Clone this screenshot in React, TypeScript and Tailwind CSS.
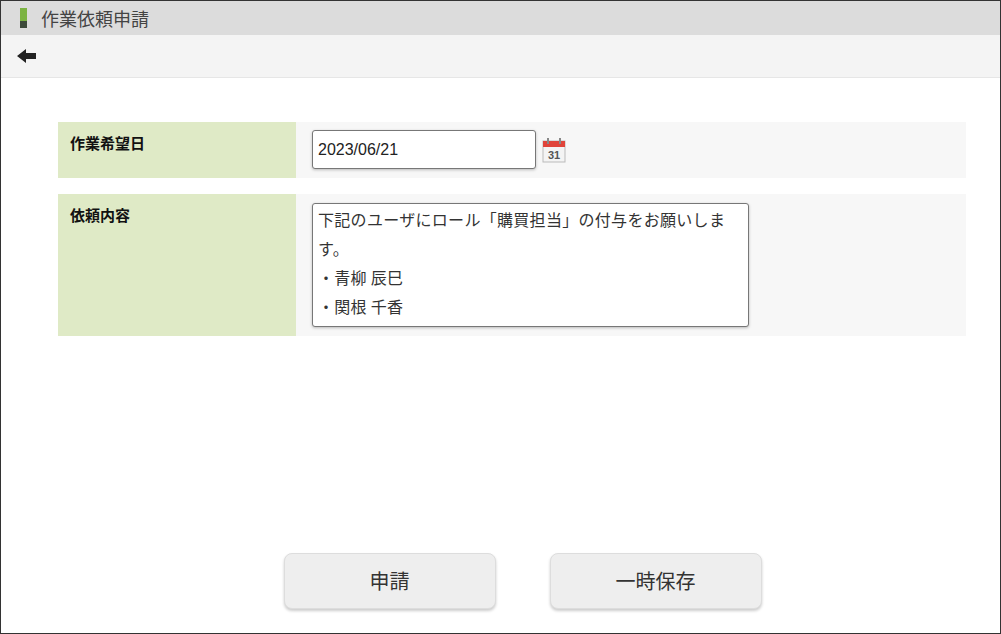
import React from "react";

export default function App() {
  const f = { fontFamily: '"Noto Sans CJK JP", "Liberation Sans", sans-serif' };
  return (
    <div className="w-[1001px] h-[634px] bg-white border border-[#333] flex flex-col text-[#333]" style={f}>
      <div className="h-[34px] bg-[#dcdcdc] flex items-center pl-[19px] gap-[14px] shrink-0">
        <div className="w-[7px] h-[20px] flex flex-col">
          <div className="flex-1 bg-[#7cb342]" />
          <div className="h-[7px] bg-[#3d4a3a]" />
        </div>
        <span className="text-[18px] text-[#444]">作業依頼申請</span>
      </div>
      <div className="h-[43px] bg-[#f4f4f4] border-b border-[#e6e6e6] flex items-center pl-[16px] shrink-0">
        <svg width="20" height="16" viewBox="0 0 20 16"><path d="M0 8 L9 1 V5 H19 V11 H9 V15 Z" fill="#222" /></svg>
      </div>
      <div className="flex flex-col gap-[16px] pt-[44px] pl-[57px] pr-[34px]">
        <div className="flex h-[56px]">
          <div className="w-[238px] bg-[#dfeac6] pl-[12px] pt-[10px] text-[15px] font-bold text-[#111]">作業希望日</div>
          <div className="flex-1 bg-[#f7f7f7] pl-[16px] pt-[8px] flex items-start gap-[6px]">
            <div className="w-[224px] h-[39px] bg-white border border-[#777] rounded-[3px] shadow-[0_1px_3px_rgba(0,0,0,0.25)] flex items-center pl-[5px] text-[16px] text-[#222]" style={{ fontFamily: '"Liberation Sans", sans-serif' }}>2023/06/21</div>
            <svg width="24" height="26" viewBox="0 0 24 26" className="mt-[7px]">
              <rect x="1" y="4" width="22" height="21" fill="#f4f4f4" stroke="#bbb" />
              <rect x="1" y="4" width="22" height="6" fill="#e0443a" />
              <rect x="5" y="1" width="2" height="6" fill="#888" />
              <rect x="17" y="1" width="2" height="6" fill="#888" />
              <text x="12" y="22" textAnchor="middle" fontSize="11" fontWeight="bold" fill="#555" fontFamily="Liberation Sans, sans-serif">31</text>
            </svg>
          </div>
        </div>
        <div className="flex h-[142px]">
          <div className="w-[238px] bg-[#dfeac6] pl-[12px] pt-[10px] text-[15px] font-bold text-[#111]">依頼内容</div>
          <div className="flex-1 bg-[#f7f7f7] pl-[16px] pt-[9px]">
            <div className="w-[437px] h-[124px] bg-white border border-[#777] rounded-[3px] shadow-[0_1px_3px_rgba(0,0,0,0.25)] px-[5px] pt-[1px] text-[16px] leading-[29px] text-[#333] tracking-[0.3px] overflow-hidden">
              <div>下記のユーザにロール「購買担当」の付与をお願いしま</div>
              <div>す。</div>
              <div>・青柳 辰巳</div>
              <div>・関根 千香</div>
            </div>
          </div>
        </div>
      </div>
      <div className="flex-1" />
      <div className="flex justify-center gap-[54px] pb-[24px] pl-[44px]">
        <button className="w-[212px] h-[56px] rounded-[8px] bg-[#eeeeee] border border-[#ddd] shadow-[0_2px_3px_rgba(0,0,0,0.2)] text-[20px] text-[#333]">申請</button>
        <button className="w-[212px] h-[56px] rounded-[8px] bg-[#eeeeee] border border-[#ddd] shadow-[0_2px_3px_rgba(0,0,0,0.2)] text-[20px] text-[#333]">一時保存</button>
      </div>
    </div>
  );
}
